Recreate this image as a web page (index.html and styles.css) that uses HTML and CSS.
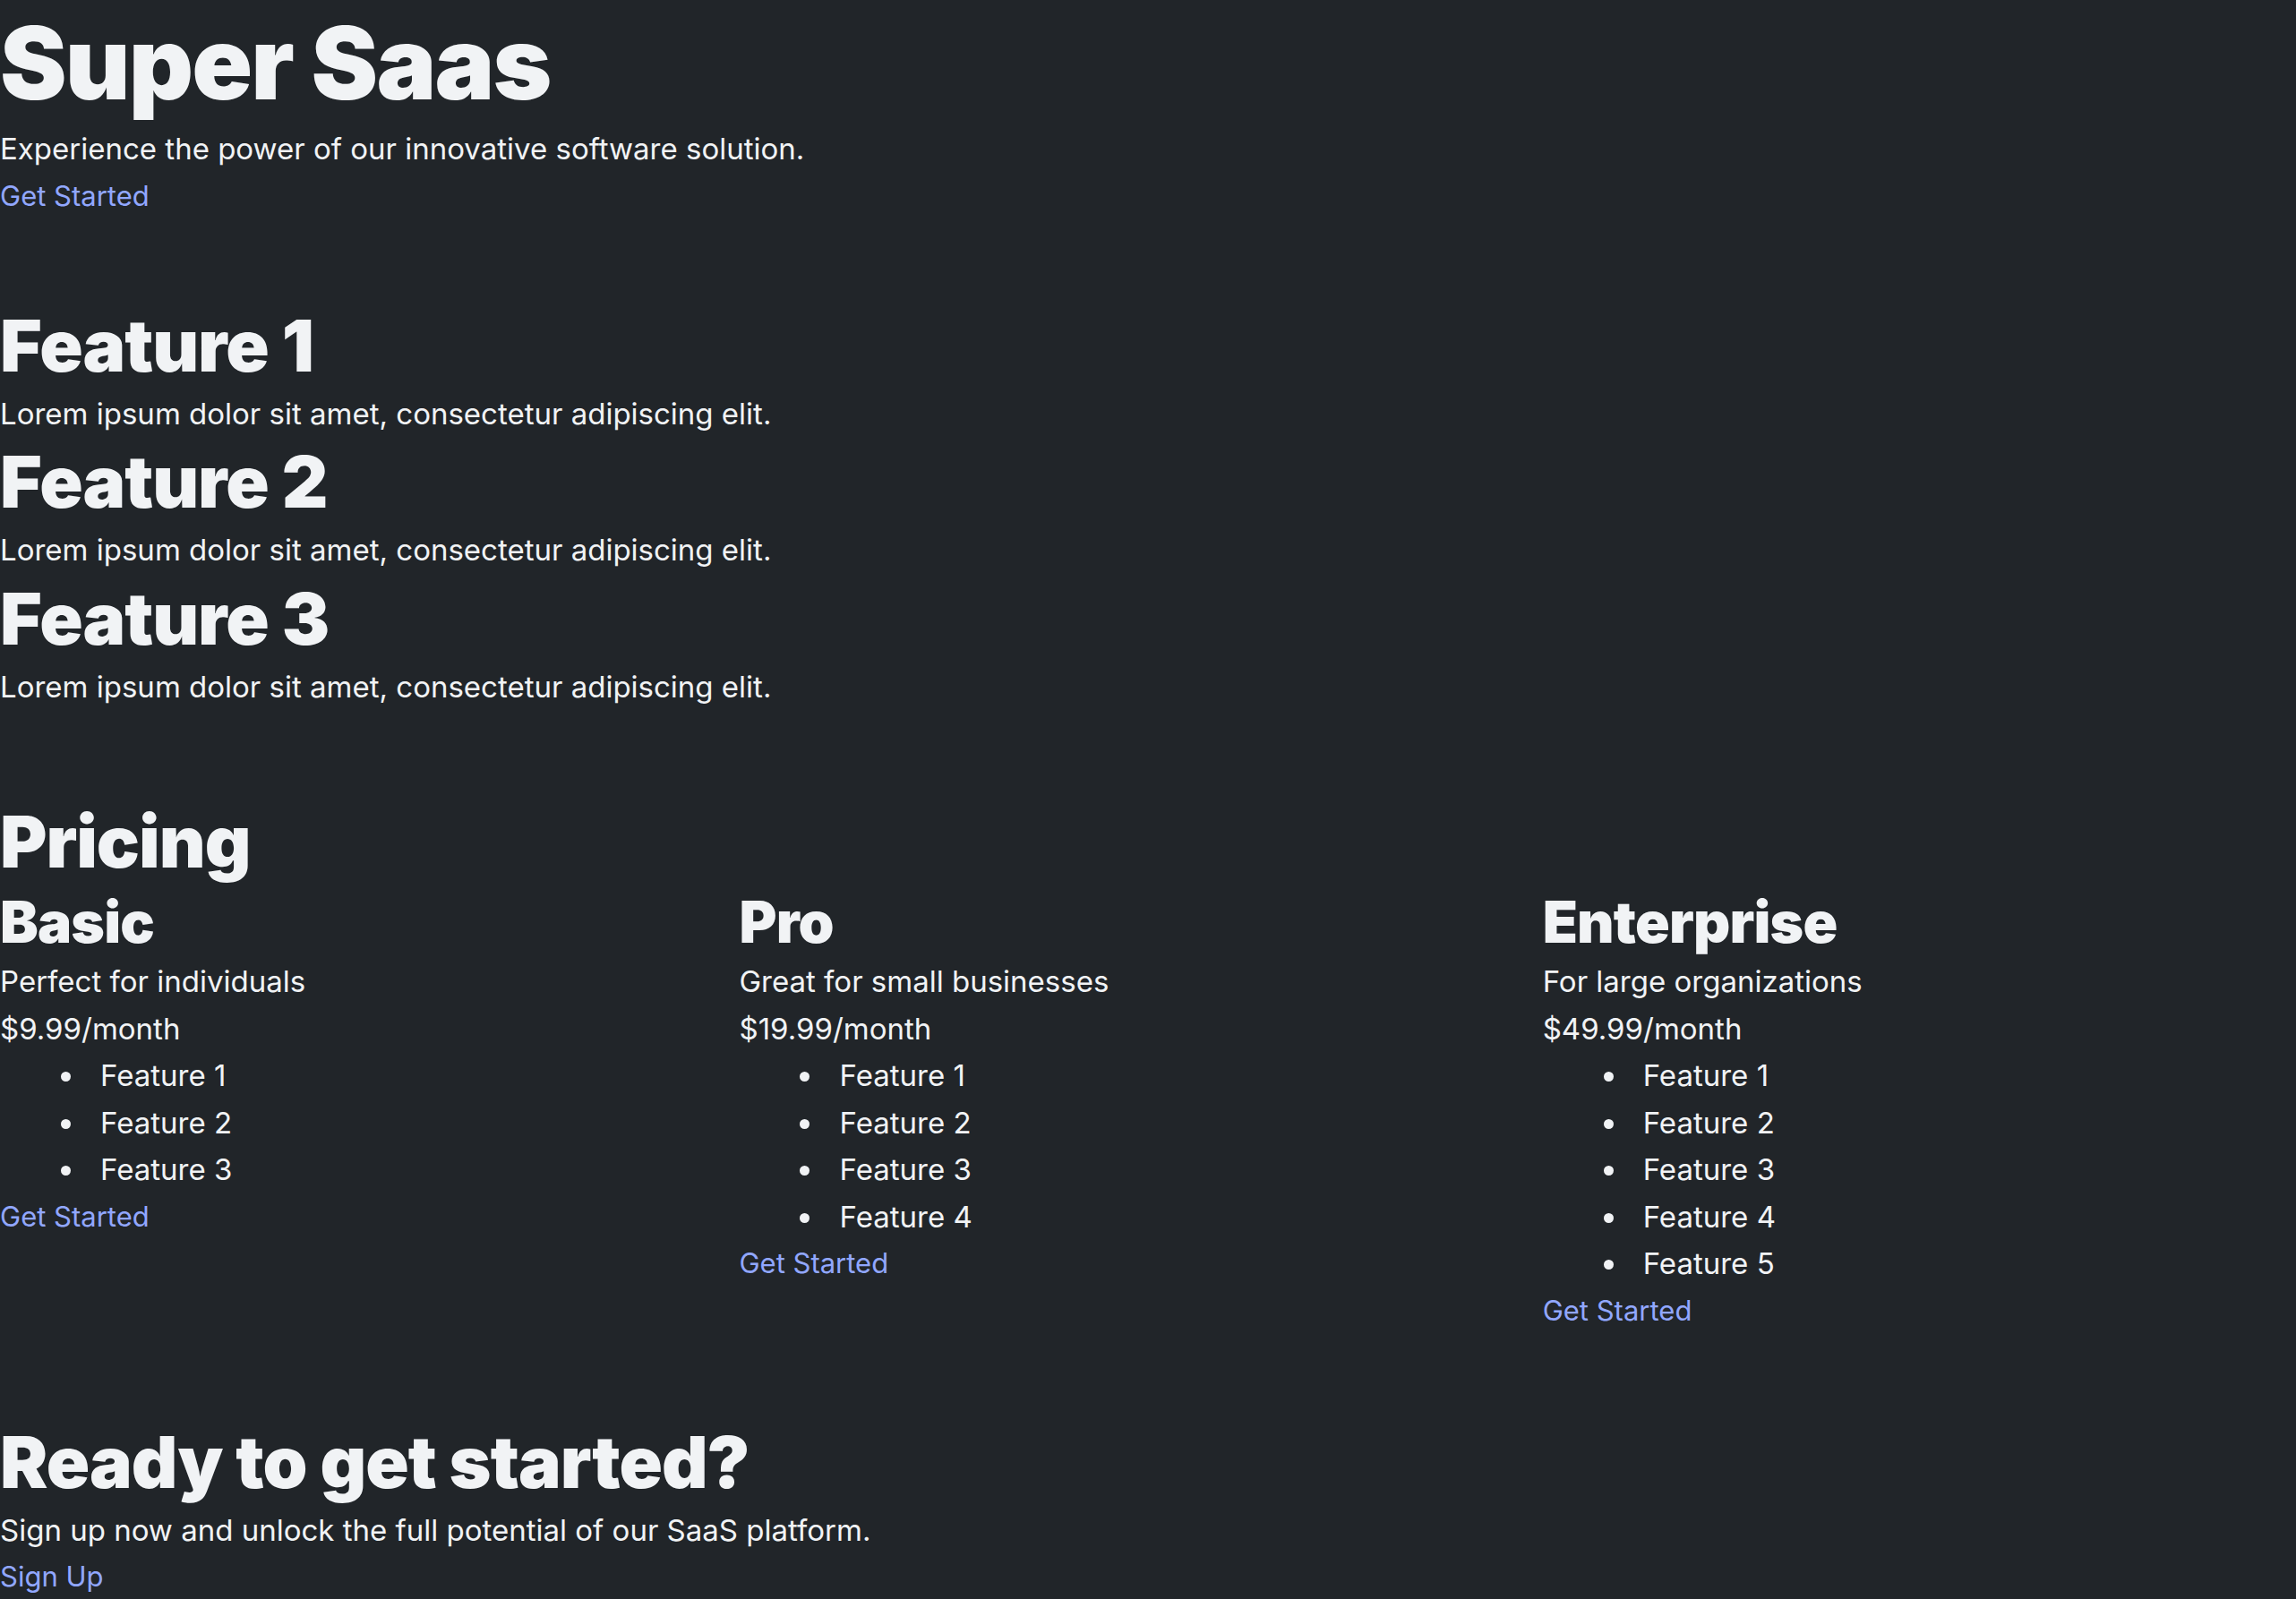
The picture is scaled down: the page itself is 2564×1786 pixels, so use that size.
FILE: index.html
```html
<!DOCTYPE html>
<html lang="en">
<head>
<meta charset="utf-8">
<title>Super Saas</title>
<link rel="stylesheet" href="styles.css">
</head>
<body>
<main class="page">
  <section class="hero">
    <h1 class="title">Super Saas</h1>
    <p class="text">Experience the power of our innovative software solution.</p>
    <a class="link" href="#">Get Started</a>
  </section>

  <section class="features">
    <div class="feature">
      <h2 class="heading">Feature 1</h2>
      <p class="text">Lorem ipsum dolor sit amet, consectetur adipiscing elit.</p>
    </div>
    <div class="feature">
      <h2 class="heading">Feature 2</h2>
      <p class="text">Lorem ipsum dolor sit amet, consectetur adipiscing elit.</p>
    </div>
    <div class="feature">
      <h2 class="heading">Feature 3</h2>
      <p class="text">Lorem ipsum dolor sit amet, consectetur adipiscing elit.</p>
    </div>
  </section>

  <section class="pricing">
    <h2 class="heading">Pricing</h2>
    <div class="plans">
      <div class="plan">
        <h3 class="plan-name">Basic</h3>
        <p class="text">Perfect for individuals</p>
        <p class="text">$9.99/month</p>
        <ul class="plan-list">
          <li>Feature 1</li>
          <li>Feature 2</li>
          <li>Feature 3</li>
        </ul>
        <a class="link" href="#">Get Started</a>
      </div>
      <div class="plan">
        <h3 class="plan-name">Pro</h3>
        <p class="text">Great for small businesses</p>
        <p class="text">$19.99/month</p>
        <ul class="plan-list">
          <li>Feature 1</li>
          <li>Feature 2</li>
          <li>Feature 3</li>
          <li>Feature 4</li>
        </ul>
        <a class="link" href="#">Get Started</a>
      </div>
      <div class="plan">
        <h3 class="plan-name">Enterprise</h3>
        <p class="text">For large organizations</p>
        <p class="text">$49.99/month</p>
        <ul class="plan-list">
          <li>Feature 1</li>
          <li>Feature 2</li>
          <li>Feature 3</li>
          <li>Feature 4</li>
          <li>Feature 5</li>
        </ul>
        <a class="link" href="#">Get Started</a>
      </div>
    </div>
  </section>

  <section class="cta">
    <h2 class="heading">Ready to get started?</h2>
    <p class="text">Sign up now and unlock the full potential of our SaaS platform.</p>
    <a class="link" href="#">Sign Up</a>
  </section>
</main>
</body>
</html>
```

FILE: styles.css
```css
html, body {
  margin: 0;
  padding: 0;
  background: #212529;
}

body {
  color: #f1f3f5;
  font-family: Inter, "Noto Sans", sans-serif;
  font-size: 33px;
  line-height: 52.5px;
}

.page {
  display: flex;
  flex-direction: column;
}

.features {
  margin-top: 92px;
}

.pricing {
  margin-top: 97px;
}

.cta {
  margin-top: 94px;
}

.title {
  margin: 0;
  font-size: 112px;
  line-height: 140px;
  font-weight: 900;
  letter-spacing: -1.8px;
}

.heading {
  margin: 0;
  font-size: 80px;
  line-height: 100px;
  font-weight: 900;
  letter-spacing: -1px;
}

.plan-name {
  margin: 0;
  font-size: 64px;
  line-height: 80px;
  font-weight: 900;
  letter-spacing: -0.8px;
}

.text {
  margin: 0;
  font-size: 33px;
  line-height: 52.5px;
}

.link {
  display: block;
  width: max-content;
  color: #91a7ff;
  text-decoration: none;
  font-size: 31px;
  line-height: 51px;
}

.plans {
  display: flex;
}

.plan {
  flex: 1 1 auto;
  display: flex;
  flex-direction: column;
  align-items: flex-start;
}

.plan-list {
  margin: 0;
  padding-left: 96px;
  list-style: disc;
}

.plan-list li {
  padding-left: 16px;
  font-size: 33px;
  line-height: 52.5px;
}
```
